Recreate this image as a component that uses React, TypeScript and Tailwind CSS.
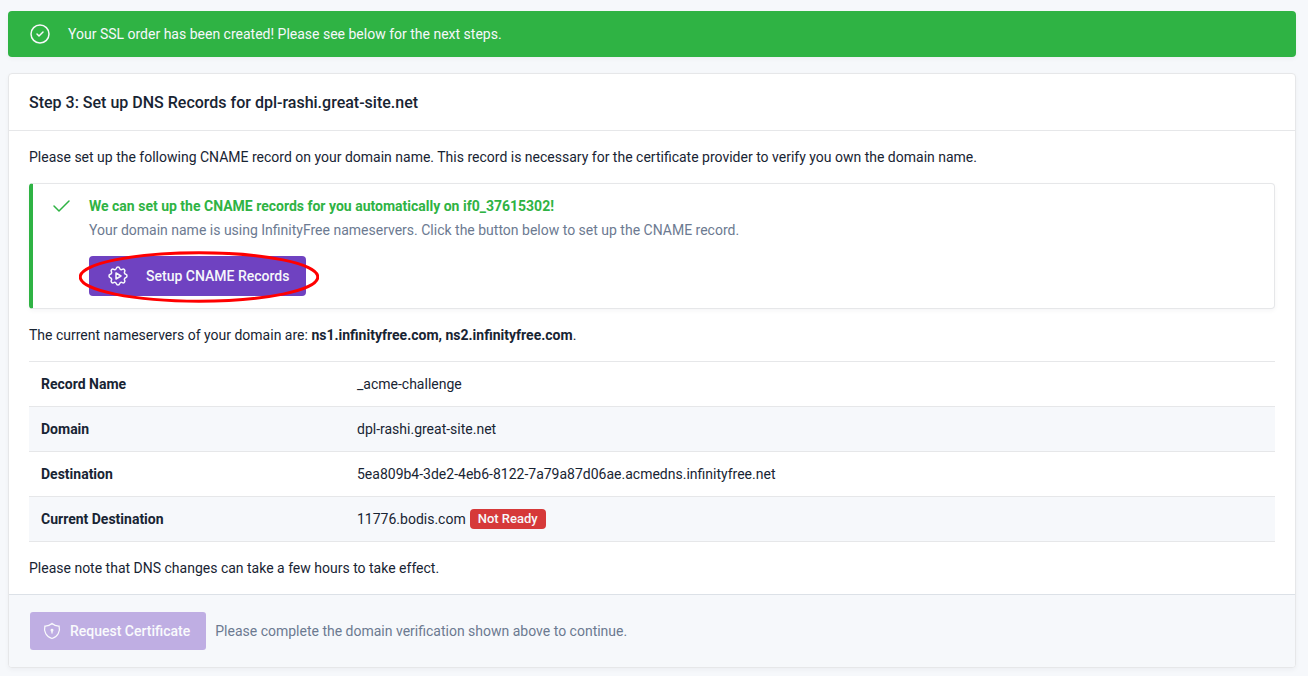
import type { ReactNode } from "react";

function Icon({ className, children }: { className: string; children: ReactNode }) {
  return (
    <svg
      aria-hidden="true"
      className={className}
      viewBox="0 0 24 24"
      fill="none"
      stroke="currentColor"
      strokeWidth="1.5"
      strokeLinecap="round"
      strokeLinejoin="round"
    >
      {children}
    </svg>
  );
}

const records = [
  { label: "Record Name", value: "_acme-challenge" },
  { label: "Domain", value: "dpl-rashi.great-site.net" },
  { label: "Destination", value: "5ea809b4-3de2-4eb6-8122-7a79a87d06ae.acmedns.infinityfree.net" },
  { label: "Current Destination", value: "11776.bodis.com", badge: "Not Ready" },
];

function SuccessBanner() {
  return (
    <div role="alert" className="flex items-center gap-4 rounded bg-[#2fb344] px-5 py-[11px] text-[#f6f8fb] shadow-[0_2px_4px_rgba(24,36,51,0.04)]">
      <Icon className="size-6 shrink-0">
        <circle cx="12" cy="12" r="9" />
        <path d="M9 12l2 2l4 -4" />
      </Icon>
      <div>Your SSL order has been created! Please see below for the next steps.</div>
    </div>
  );
}

function AutoSetup() {
  return (
    <div className="flex gap-4 rounded border border-l-4 border-[#e6e7e9] border-l-[#2fb344] bg-white px-4 py-3 shadow-[0_2px_4px_rgba(24,36,51,0.04)]">
      <div className="flex h-5 shrink-0 items-center text-[#2fb344]">
        <Icon className="size-6">
          <path d="M5 12l5 5l10 -10" />
        </Icon>
      </div>
      <div className="flex flex-col items-start">
        <h4 className="mb-1 font-bold text-[#2fb344]">
          We can set up the CNAME records for you automatically on if0_37615302!
        </h4>
        <p className="mb-4 text-[#6c7a91]">
          Your domain name is using InfinityFree nameservers. Click the button below to set up the CNAME record.
        </p>
        <div className="relative">
          <button type="button" className="flex h-10 items-center gap-4 rounded bg-[#6f42c1] px-[17px] font-medium text-[#f6f8fb]">
            <Icon className="size-6">
              <path d="M10.325 4.317c.426 -1.756 2.924 -1.756 3.35 0a1.724 1.724 0 0 0 2.573 1.066c1.543 -.94 3.31 .826 2.37 2.37a1.724 1.724 0 0 0 1.065 2.572c1.756 .426 1.756 2.924 0 3.35a1.724 1.724 0 0 0 -1.066 2.573c.94 1.543 -.826 3.31 -2.37 2.37a1.724 1.724 0 0 0 -2.572 1.065c-.426 1.756 -2.924 1.756 -3.35 0a1.724 1.724 0 0 0 -2.573 -1.066c-1.543 .94 -3.31 -.826 -2.37 -2.37a1.724 1.724 0 0 0 -1.065 -2.572c-1.756 -.426 -1.756 -2.924 0 -3.35a1.724 1.724 0 0 0 1.066 -2.573c-.94 -1.543 .826 -3.31 2.37 -2.37c1 .608 2.296 .07 2.572 -1.065z" />
              <path d="M10 9v6l5 -3z" />
            </Icon>
            Setup CNAME Records
          </button>
          <svg
            aria-hidden="true"
            className="pointer-events-none absolute -top-[5px] -left-[10px] h-[52px] w-[240px] max-w-none"
            viewBox="0 0 240 52"
            fill="none"
          >
            <ellipse cx="120" cy="26" rx="118.8" ry="24.2" stroke="#ff0000" strokeWidth="3" />
          </svg>
        </div>
      </div>
    </div>
  );
}

function RecordTable() {
  return (
    <table className="w-full border-collapse border-y border-[#e6e7e9] text-left">
      <tbody>
        {records.map((record) => (
          <tr key={record.label} className="border-b border-[#e6e7e9] even:bg-[#f6f8fb]">
            <th scope="row" className="w-[316px] px-3 py-3 font-bold">
              {record.label}
            </th>
            <td className="px-3">
              <div className="flex h-5 items-center gap-1">
                {record.value}
                {record.badge && (
                  <span className="flex h-5 items-center rounded bg-[#d63939] px-2 text-[13px] font-medium text-[#f6f8fb]">
                    {record.badge}
                  </span>
                )}
              </div>
            </td>
          </tr>
        ))}
      </tbody>
    </table>
  );
}

export default function App() {
  return (
    <main className="flex min-h-screen flex-col gap-4 bg-[#f6f8fb] pt-[11px] pr-3 pb-2 pl-2 font-[Roboto,sans-serif] text-sm leading-5 text-[#182433]">
      <SuccessBanner />
      <section className="overflow-hidden rounded border border-[#e6e7e9] bg-white shadow-[0_2px_4px_rgba(24,36,51,0.04)]">
        <header className="border-b border-[#e6e7e9] px-5 pt-[17px] pb-[15px]">
          <h3 className="text-base leading-6 font-medium">Step 3: Set up DNS Records for dpl-rashi.great-site.net</h3>
        </header>
        <div className="flex flex-col gap-4 px-5 py-4">
          <p>
            Please set up the following CNAME record on your domain name. This record is necessary for the certificate
            provider to verify you own the domain name.
          </p>
          <AutoSetup />
          <p>
            The current nameservers of your domain are:{" "}
            <strong className="font-bold">ns1.infinityfree.com, ns2.infinityfree.com</strong>.
          </p>
          <RecordTable />
          <p>Please note that DNS changes can take a few hours to take effect.</p>
        </div>
        <footer className="flex items-center gap-2 border-t border-[#dce1e7] bg-[#f6f8fb] px-5 py-4">
          <button
            type="button"
            disabled
            className="flex h-10 items-center gap-2 rounded border border-transparent bg-[#6f42c1] bg-clip-padding pr-4 pl-3 font-medium text-white opacity-40"
          >
            <Icon className="size-5">
              <path d="M12 3a12 12 0 0 0 8.5 3a12 12 0 0 1 -8.5 15a12 12 0 0 1 -8.5 -15a12 12 0 0 0 8.5 -3" />
              <circle cx="12" cy="11" r="1" />
              <path d="M12 12l0 2.5" />
            </Icon>
            Request Certificate
          </button>
          <span className="text-[#6c7a91]">Please complete the domain verification shown above to continue.</span>
        </footer>
      </section>
    </main>
  );
}
